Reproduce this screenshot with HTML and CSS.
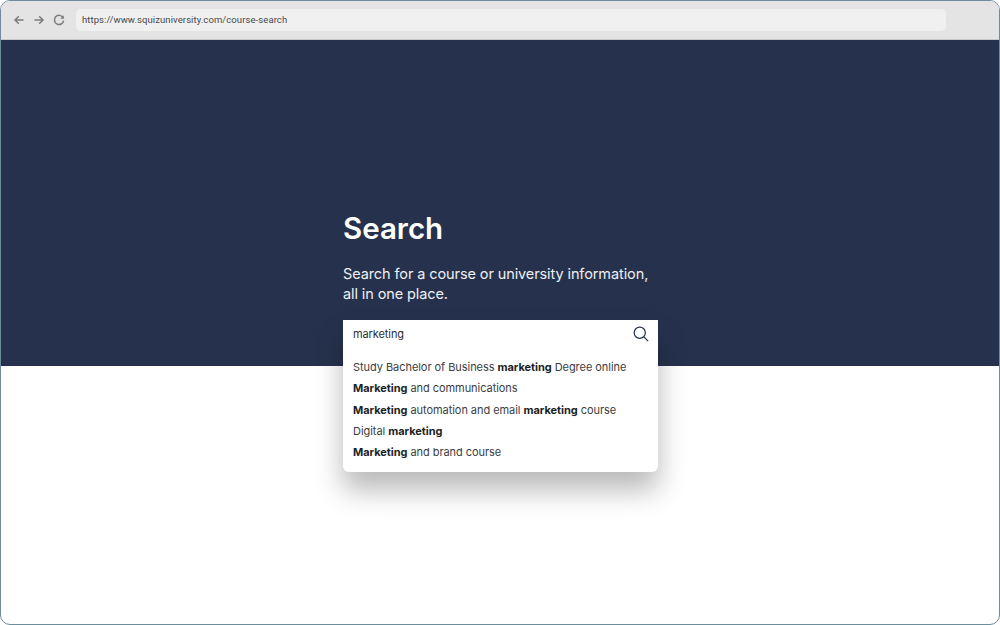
FILE: index.html
```html
<!DOCTYPE html>
<html lang="en">
<head>
<meta charset="utf-8">
<title>Course search</title>
<link rel="stylesheet" href="styles.css">
</head>
<body>
<div class="window">
  <header class="toolbar">
    <nav class="nav-icons">
      <svg class="nav-icon" viewBox="0 0 12 12"><path d="M10.5 6H2M5.8 2.2 2 6l3.8 3.8"/></svg>
      <svg class="nav-icon" viewBox="0 0 12 12"><path d="M1.5 6H10M6.2 2.2 10 6 6.2 9.8"/></svg>
      <svg class="nav-icon" viewBox="0 0 12 12"><path d="M10 3.6A4.6 4.6 0 1 0 10.6 6.6"/><path class="solid" d="M10.8 1.2v3.6H7.2z"/></svg>
    </nav>
    <div class="address">https://www.squizuniversity.com/course-search</div>
  </header>
  <section class="hero">
    <div class="search-block">
      <h1 class="title">Search</h1>
      <p class="lead">Search for a course or university information, all in one place.</p>
      <div class="panel">
        <div class="query">
          <span class="query-text">marketing</span>
          <svg class="search-icon" viewBox="0 0 18 18"><circle cx="7.6" cy="7.6" r="6.3"/><path d="m12.2 12.2 4.8 4.8"/></svg>
        </div>
        <ul class="results">
          <li>Study Bachelor of Business <b>marketing</b> Degree online</li>
          <li><b>Marketing</b> and communications</li>
          <li><b>Marketing</b> automation and email <b>marketing</b> course</li>
          <li>Digital <b>marketing</b></li>
          <li><b>Marketing</b> and brand course</li>
        </ul>
      </div>
    </div>
  </section>
</div>
</body>
</html>
```

FILE: styles.css
```css
* { box-sizing: border-box; }
html, body { margin: 0; height: 100%; background: #fff; }
body { font-family: "Inter", "Liberation Sans", sans-serif; overflow: hidden; }
.window {
  height: 625px;
  border: 1px solid #6d8d9b;
  border-radius: 10px;
  overflow: hidden;
  background: #fff;
}
.toolbar {
  height: 39px;
  background: #e4e4e4;
  border-bottom: 1px solid #c9c9c9;
  display: flex;
  align-items: center;
  padding: 0 53px 0 12px;
}
.nav-icons { display: flex; gap: 8px; width: 63px; flex: none; }
.nav-icon { width: 12px; height: 12px; fill: none; stroke: #7b7b7b; stroke-width: 1.5; }
.nav-icon .solid { fill: #7b7b7b; stroke: none; }
.address {
  flex: 1;
  height: 22px;
  background: #f0f0f0;
  border-radius: 5px;
  padding-left: 6px;
  font: 9.5px/22px "Roboto", sans-serif;
  color: #484848;
  letter-spacing: 0.08px;
}
.hero { height: 326px; background: #26324d; padding-top: 170px; }
.search-block { width: 315px; margin-left: 342px; }
.title { margin: 0; font-size: 29.5px; line-height: 36px; font-weight: 600; color: #fff; }
.lead { margin: 18px 0 16px; font-size: 14.5px; line-height: 20px; font-weight: 400; color: #eef0f3; letter-spacing: -0.1px; }
.panel {
  position: relative;
  z-index: 2;
  background: #fff;
  border-radius: 0 0 6px 6px;
  padding: 0 9px 0 10px;
  box-shadow: 0 18px 28px rgba(0, 0, 0, 0.28);
}
.query { height: 28px; display: flex; align-items: center; justify-content: space-between; }
.query-text { font-size: 11px; color: #2b2f36; letter-spacing: -0.1px; }
.search-icon { width: 16px; height: 16px; fill: none; stroke: #26324d; stroke-width: 1.4; }
.results { list-style: none; margin: 0; padding: 9px 0 8.5px; }
.results li { height: 21.3px; font-size: 11px; line-height: 21.3px; color: #3a3d42; letter-spacing: -0.05px; }
.results b { font-weight: 700; color: #1c1f24; }
```
